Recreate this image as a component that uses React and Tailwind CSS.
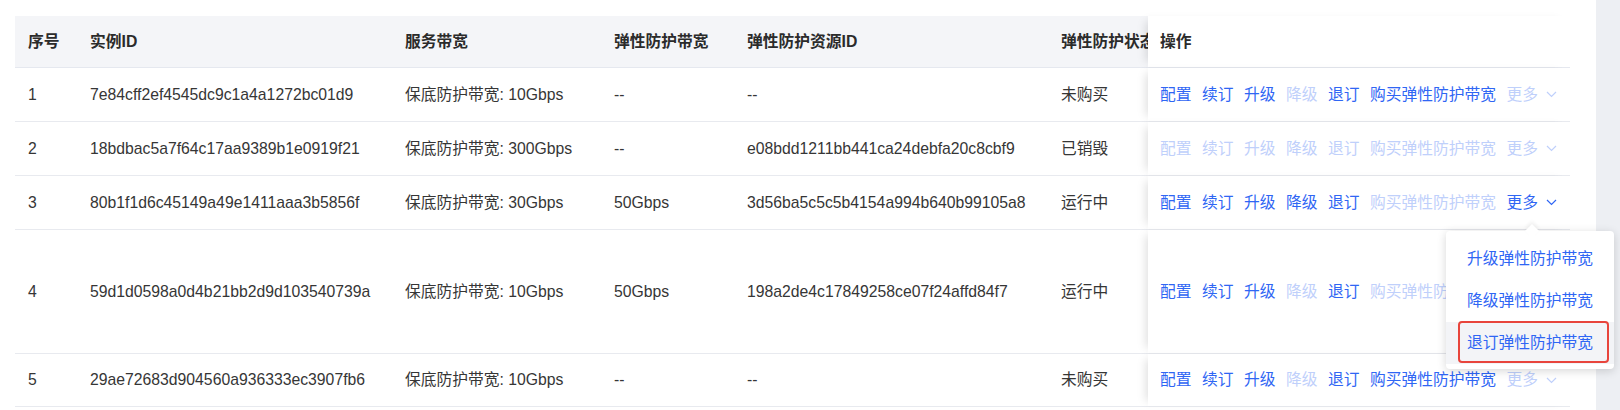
import React from "react";

const FONT = { fontFamily: '"Liberation Sans", "Noto Sans CJK SC", sans-serif' };

const rows = [
  {
    no: "1",
    id: "7e84cff2ef4545dc9c1a4a1272bc01d9",
    bw: "保底防护带宽: 10Gbps",
    ebw: "--",
    rid: "--",
    st: "未购买",
    h: "h-[54px]",
    ops: [1, 1, 1, 0, 1, 1, 0],
  },
  {
    no: "2",
    id: "18bdbac5a7f64c17aa9389b1e0919f21",
    bw: "保底防护带宽: 300Gbps",
    ebw: "--",
    rid: "e08bdd1211bb441ca24debfa20c8cbf9",
    st: "已销毁",
    h: "h-[54px]",
    ops: [0, 0, 0, 0, 0, 0, 0],
  },
  {
    no: "3",
    id: "80b1f1d6c45149a49e1411aaa3b5856f",
    bw: "保底防护带宽: 30Gbps",
    ebw: "50Gbps",
    rid: "3d56ba5c5c5b4154a994b640b99105a8",
    st: "运行中",
    h: "h-[54px]",
    ops: [1, 1, 1, 1, 1, 0, 1],
  },
  {
    no: "4",
    id: "59d1d0598a0d4b21bb2d9d103540739a",
    bw: "保底防护带宽: 10Gbps",
    ebw: "50Gbps",
    rid: "198a2de4c17849258ce07f24affd84f7",
    st: "运行中",
    h: "h-[124px]",
    ops: [1, 1, 1, 0, 1, 0, 1],
  },
  {
    no: "5",
    id: "29ae72683d904560a936333ec3907fb6",
    bw: "保底防护带宽: 10Gbps",
    ebw: "--",
    rid: "--",
    st: "未购买",
    h: "h-[53px]",
    ops: [1, 1, 1, 0, 1, 1, 0],
  },
];

const opLabels = ["配置", "续订", "升级", "降级", "退订", "购买弹性防护带宽"];

function Chevron({ on }) {
  return (
    <svg width="11" height="7" viewBox="0 0 11 7" className={on ? "text-[#2f66f4]" : "text-[#bfd0fb]"}>
      <path d="M1 1 L5.5 5.5 L10 1" fill="none" stroke="currentColor" strokeWidth="1.2" />
    </svg>
  );
}

function Ops({ ops }) {
  return (
    <div className="flex items-center gap-[10.5px] whitespace-nowrap">
      {opLabels.map((l, i) => (
        <span key={l} className={ops[i] ? "text-[#2f66f4]" : "text-[#bfd0fb]"}>
          {l}
        </span>
      ))}
      <span className="flex items-center gap-[8px]">
        <span className={ops[6] ? "text-[#2f66f4]" : "text-[#bfd0fb]"}>更多</span>
        <Chevron on={ops[6]} />
      </span>
    </div>
  );
}

const cell = "pl-[13px] flex items-center shrink-0 overflow-hidden whitespace-nowrap";
const opsCell =
  "relative z-10 w-[422px] shrink-0 pl-[12px] flex items-center bg-white shadow-[-7px_0_9px_-5px_rgba(0,0,0,0.13)]";

export default function App() {
  return (
    <div
      className="relative w-[1620px] h-[410px] bg-[#edeff3] flex overflow-hidden text-[15.75px] text-[#363636]"
      style={FONT}
    >
      <div className="w-[1596px] h-full bg-white pt-[16px] pl-[15px] pr-[26px]">
        <div className="w-[1555px] flex flex-col">
          <div className="flex h-[52px] bg-[#f4f5f8] border-b border-[#e5e8ef] font-bold text-[#2b2b2b]">
            <div className={`${cell} w-[62px]`}>序号</div>
            <div className={`${cell} w-[315px]`}>实例ID</div>
            <div className={`${cell} w-[209px]`}>服务带宽</div>
            <div className={`${cell} w-[133px]`}>弹性防护带宽</div>
            <div className={`${cell} w-[314px]`}>弹性防护资源ID</div>
            <div className={`${cell} w-[100px]`}>弹性防护状态</div>
            <div className={`${opsCell} bg-[#f4f5f8]`}>操作</div>
          </div>
          {rows.map((r) => (
            <div key={r.no} className={`flex ${r.h} border-b border-[#e8eaef]`}>
              <div className={`${cell} w-[62px]`}>{r.no}</div>
              <div className={`${cell} w-[315px]`}>{r.id}</div>
              <div className={`${cell} w-[209px]`}>{r.bw}</div>
              <div className={`${cell} w-[133px]`}>{r.ebw}</div>
              <div className={`${cell} w-[314px]`}>{r.rid}</div>
              <div className={`${cell} w-[100px]`}>{r.st}</div>
              <div className={opsCell}>
                <Ops ops={r.ops} />
              </div>
            </div>
          ))}
        </div>
      </div>

      <div className="absolute left-[1446px] top-[231px] w-[168px] h-[138px] bg-white rounded-[4px] shadow-[0_2px_10px_rgba(0,0,0,0.16)] pt-[7px] z-20">
        <div className="absolute left-[81px] -top-[5px] w-[10px] h-[10px] bg-white rotate-45 shadow-[-2px_-2px_4px_rgba(0,0,0,0.06)]" />
        <div className="relative flex flex-col text-[#2f66f4]">
          <div className="h-[42px] flex items-center justify-center">升级弹性防护带宽</div>
          <div className="h-[42px] flex items-center justify-center">降级弹性防护带宽</div>
          <div className="h-[42px] flex items-center justify-center bg-[#f3f4f7]">退订弹性防护带宽</div>
        </div>
        <div className="absolute left-[12px] top-[90px] w-[151px] h-[42px] border-2 border-[#e8453c] rounded-[4px]" />
      </div>
    </div>
  );
}
